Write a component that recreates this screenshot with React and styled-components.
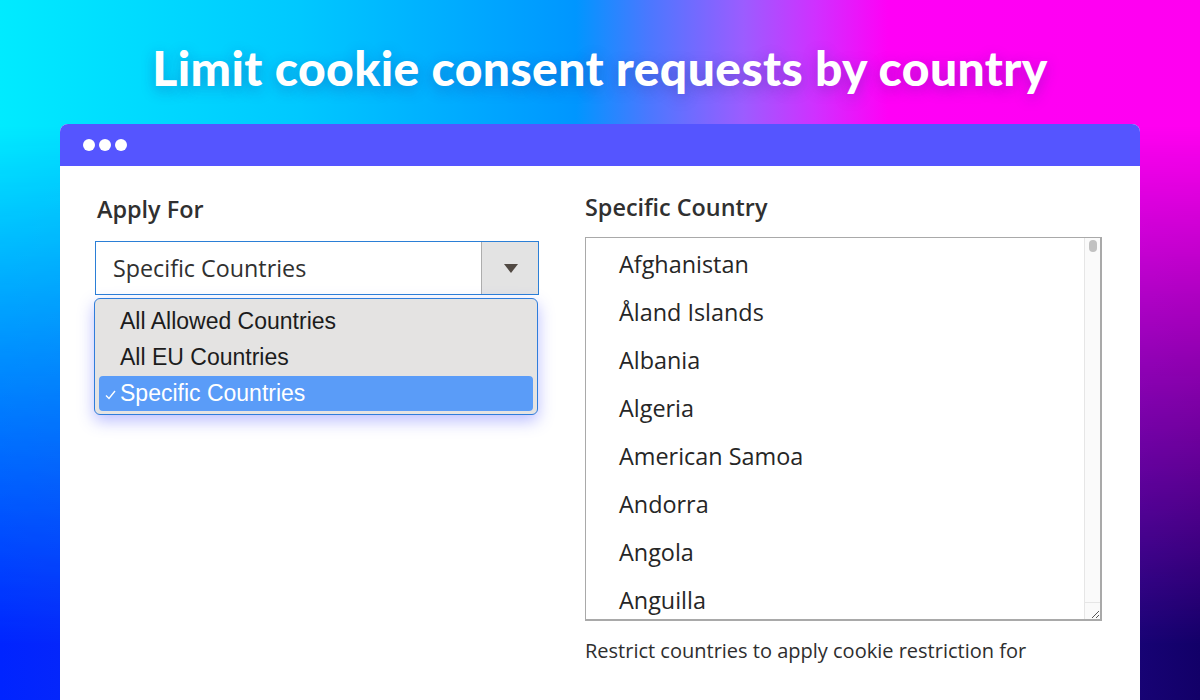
import React from 'react'
import styled, { createGlobalStyle } from 'styled-components'

const GlobalStyle = createGlobalStyle`
  html, body {
    margin: 0;
    padding: 0;
  }
  body {
    font-family: 'Open Sans', 'Liberation Sans', sans-serif;
  }
`

const countries = [
  'Afghanistan',
  'Åland Islands',
  'Albania',
  'Algeria',
  'American Samoa',
  'Andorra',
  'Angola',
  'Anguilla'
]

const options = ['All Allowed Countries', 'All EU Countries', 'Specific Countries']

const App = () => {
  const selected = 'Specific Countries'
  return (
    <Page>
      <GlobalStyle />
      <Hero>
        <Title>Limit cookie consent requests by country</Title>
      </Hero>
      <Window>
        <TitleBar>
          <Dot />
          <Dot />
          <Dot />
        </TitleBar>
        <Body>
          <Column>
            <Label>Apply For</Label>
            <SelectWrap>
              <Select>
                <SelectValue>{selected}</SelectValue>
                <ArrowBox>
                  <Arrow />
                </ArrowBox>
              </Select>
              <Dropdown>
                {options.map(option => (
                  <Option key={option} active={option === selected}>
                    <Check>
                      {option === selected && (
                        <svg width='11' height='10' viewBox='0 0 11 10'>
                          <path d='M1 5.5 L4 8.5 L10 1' fill='none' stroke='#fff' strokeWidth='1.4' />
                        </svg>
                      )}
                    </Check>
                    {option}
                  </Option>
                ))}
              </Dropdown>
            </SelectWrap>
          </Column>
          <Column>
            <Label tight>Specific Country</Label>
            <ListBox>
              <Items>
                {countries.map(country => (
                  <Item key={country}>{country}</Item>
                ))}
              </Items>
              <ScrollTrack>
                <Thumb />
                <Grip>
                  <svg width='10' height='10' viewBox='0 0 10 10'>
                    <path d='M9 2 L2 9 M9 6 L6 9' stroke='#555' strokeWidth='1' />
                  </svg>
                </Grip>
              </ScrollTrack>
            </ListBox>
            <Help>Restrict countries to apply cookie restriction for</Help>
          </Column>
        </Body>
      </Window>
    </Page>
  )
}

const Page = styled.div`
  position: relative;
  width: 1200px;
  height: 700px;
  overflow: hidden;
  display: flex;
  flex-direction: column;
  background: linear-gradient(
    to right,
    #00ebff 0%,
    #00c8ff 25%,
    #0096ff 48%,
    #4a78ff 54%,
    #9c5cff 62%,
    #d030ff 68%,
    #ff00f6 74%,
    #ff00f0 100%
  );
  &::before {
    content: '';
    position: absolute;
    inset: 0;
    background: linear-gradient(to right, #0024ff 0%, #1a30e8 30%, #3010b0 70%, #120068 100%);
    -webkit-mask-image: linear-gradient(to bottom, transparent 18%, rgba(0, 0, 0, 0.45) 50%, #000 92%);
    mask-image: linear-gradient(to bottom, transparent 18%, rgba(0, 0, 0, 0.45) 50%, #000 92%);
  }
`

const Hero = styled.header`
  position: relative;
  height: 124px;
  display: flex;
  align-items: center;
  justify-content: center;
  padding-top: 10px;
  box-sizing: border-box;
`

const Title = styled.h1`
  margin: 0;
  font-family: 'Lato', 'Liberation Sans', sans-serif;
  font-weight: 900;
  font-size: 48px;
  letter-spacing: 0.4px;
  color: #fff;
  text-shadow: 0 4px 14px rgba(40, 40, 140, 0.35);
`

const Window = styled.section`
  position: relative;
  flex: 1;
  margin: 0 60px;
  background: #fff;
  border-radius: 8px 8px 0 0;
  overflow: hidden;
  display: flex;
  flex-direction: column;
`

const TitleBar = styled.div`
  height: 42px;
  background: #5555ff;
  display: flex;
  align-items: center;
  gap: 4px;
  padding-left: 23px;
`

const Dot = styled.span`
  width: 12px;
  height: 12px;
  border-radius: 50%;
  background: #fff;
`

const Body = styled.div`
  display: grid;
  grid-template-columns: 444px 517px;
  column-gap: 46px;
  padding: 26px 38px 0 35px;
`

const Column = styled.div`
  display: flex;
  flex-direction: column;
`

const Label = styled.div`
  font-family: 'Open Sans', sans-serif;
  font-weight: 600;
  font-size: 23.4px;
  line-height: 30px;
  color: #303030;
  margin-left: ${p => (p.tight ? '0' : '2px')};
  margin-bottom: ${p => (p.tight ? '15px' : '17px')};
  margin-top: ${p => (p.tight ? '0' : '2px')};
`

const SelectWrap = styled.div`
  position: relative;
`

const Select = styled.div`
  height: 54px;
  box-sizing: border-box;
  border: 1px solid #2b7fd6;
  display: flex;
  align-items: stretch;
  background: #fff;
`

const SelectValue = styled.div`
  flex: 1;
  display: flex;
  align-items: center;
  padding-left: 17px;
  font-size: 23.3px;
  color: #303030;
`

const ArrowBox = styled.div`
  width: 56px;
  background: #e3e3e3;
  border-left: 1px solid #adadad;
  display: flex;
  align-items: center;
  justify-content: center;
`

const Arrow = styled.span`
  width: 0;
  height: 0;
  border-left: 7px solid transparent;
  border-right: 7px solid transparent;
  border-top: 9px solid #514943;
  margin-left: 1px;
`

const Dropdown = styled.ul`
  position: absolute;
  top: 57px;
  left: -1px;
  right: 1px;
  margin: 0;
  padding: 4px 4px 3px;
  list-style: none;
  background: #e4e3e2;
  border: 1px solid #2f7ddb;
  border-radius: 6px;
  box-shadow: 0 6px 16px rgba(60, 70, 255, 0.35);
`

const Option = styled.li`
  display: flex;
  align-items: center;
  height: ${p => (p.active ? '35px' : '36px')};
  margin-top: ${p => (p.active ? '1px' : '0')};
  border-radius: 4px;
  font-family: 'Liberation Sans', Arial, sans-serif;
  font-size: 23px;
  color: ${p => (p.active ? '#fff' : '#1c1c1c')};
  background: ${p => (p.active ? '#5a9cf8' : 'transparent')};
`

const Check = styled.span`
  width: 21px;
  padding-left: 6px;
  box-sizing: border-box;
  display: flex;
  align-items: center;
  padding-top: 2px;
`

const ListBox = styled.div`
  height: 384px;
  box-sizing: border-box;
  border: 2px solid #a9a9a9;
  border-top-width: 1px;
  border-left-width: 1px;
  display: flex;
  background: #fff;
`

const Items = styled.ul`
  flex: 1;
  margin: 0;
  padding: 2px 0 0 33px;
  list-style: none;
  overflow: hidden;
`

const Item = styled.li`
  height: 48px;
  line-height: 48px;
  font-size: 23.4px;
  color: #262626;
`

const ScrollTrack = styled.div`
  width: 15px;
  background: #fafafa;
  border-left: 1px solid #e6e6e6;
  display: flex;
  flex-direction: column;
  justify-content: space-between;
  align-items: center;
`

const Thumb = styled.span`
  margin-top: 2px;
  width: 8px;
  height: 12px;
  border-radius: 4px;
  background: #c1c1c1;
`

const Grip = styled.span`
  width: 15px;
  height: 16px;
  border-top: 1px solid #e6e6e6;
  display: flex;
  align-items: flex-end;
  justify-content: flex-end;
`

const Help = styled.p`
  margin: 17px 0 0;
  font-size: 20px;
  line-height: 26px;
  color: #2e2e2e;
`

export default App
